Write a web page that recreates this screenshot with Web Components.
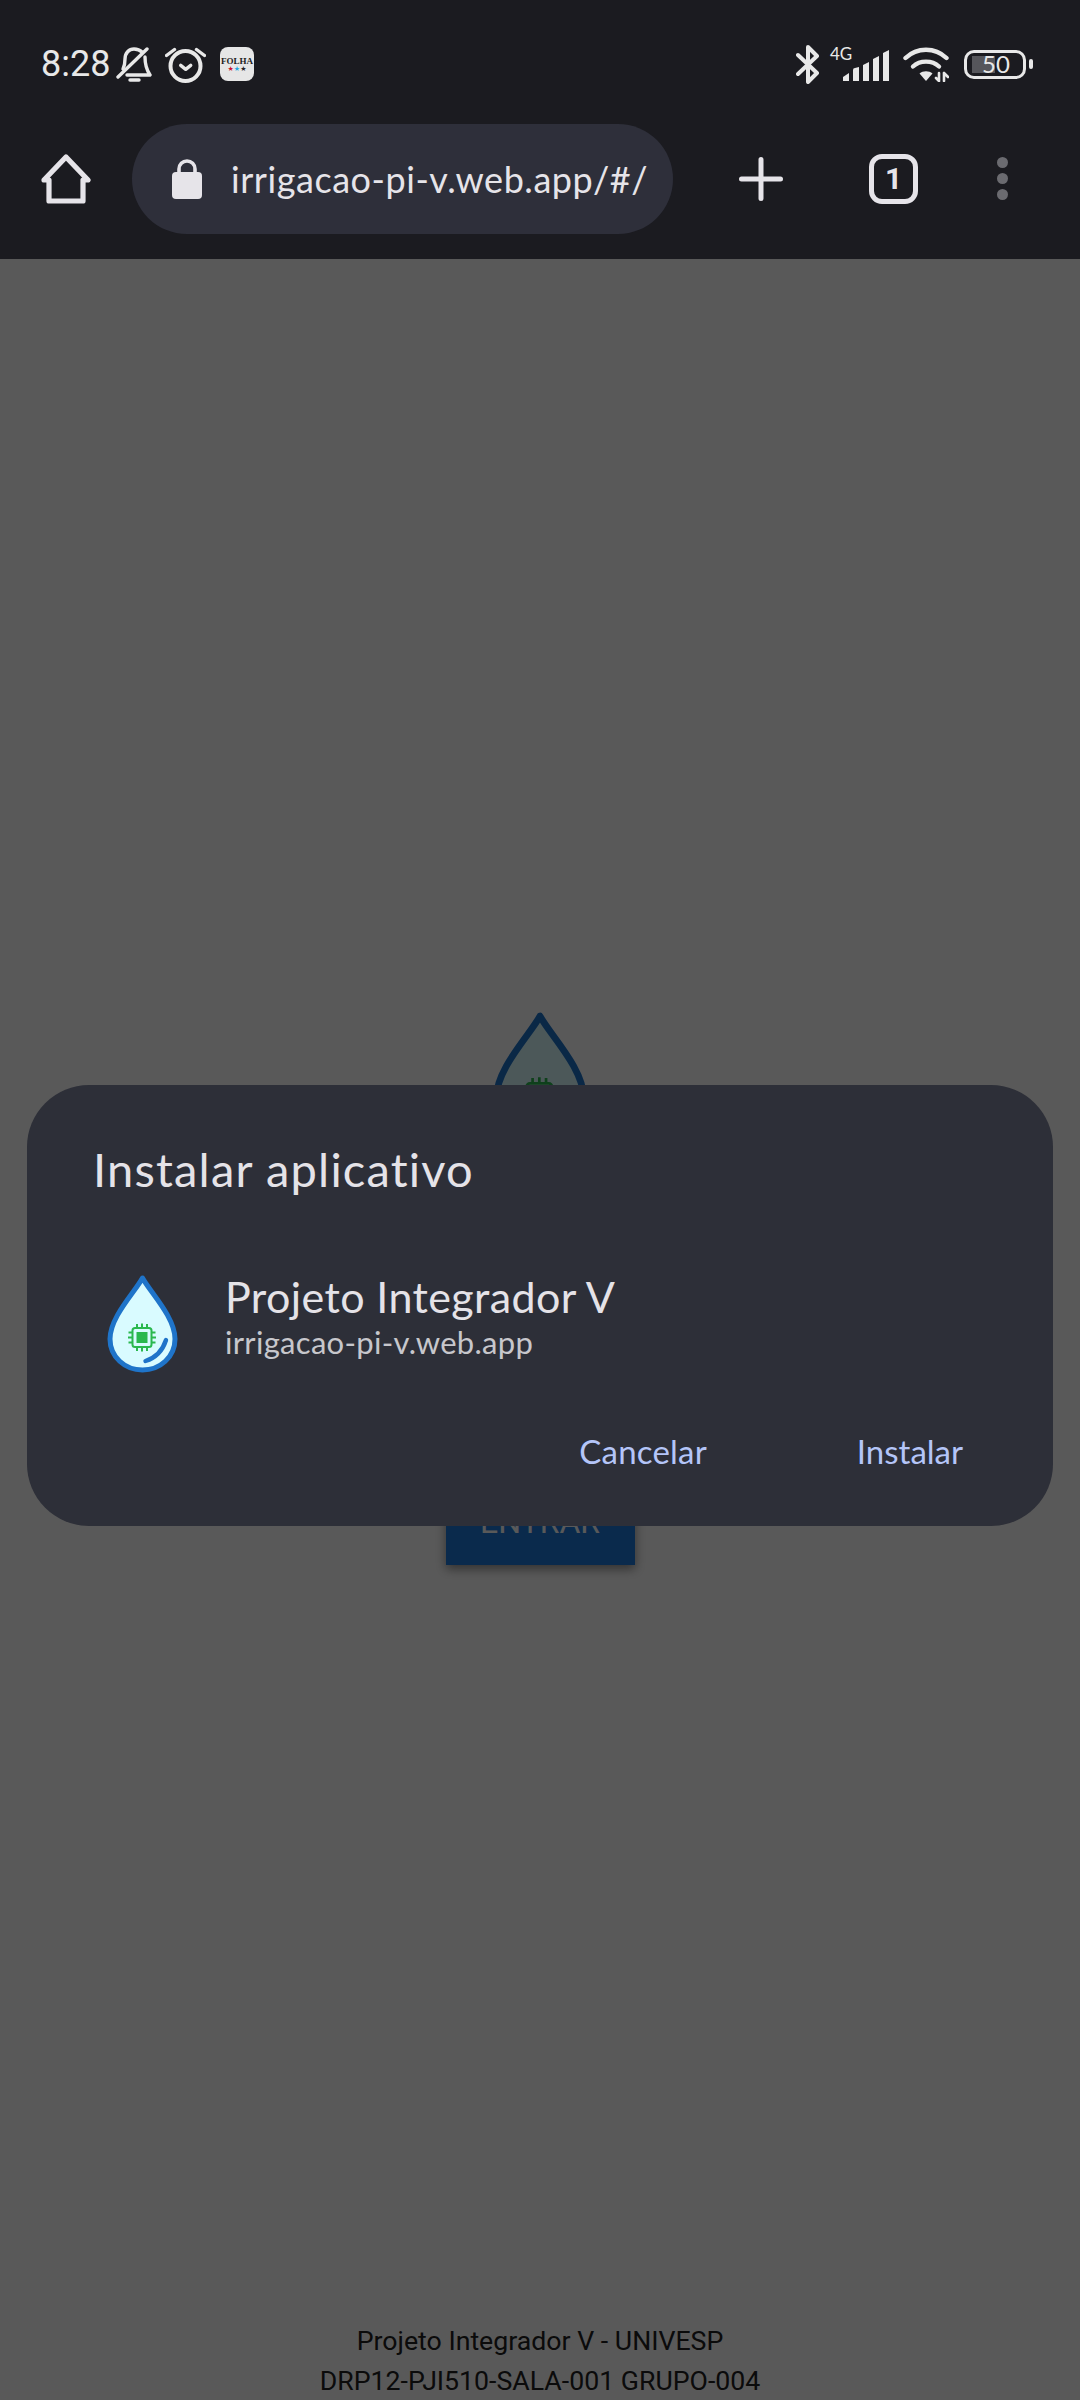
<!DOCTYPE html>
<html lang="pt-BR">
<head>
<meta charset="utf-8">
<title>Projeto Integrador V</title>
<style>
  html, body { margin: 0; padding: 0; background: #1b1b20; }
  body { width: 1080px; height: 2400px; overflow: hidden; }
</style>
</head>
<body>
<app-shell>
  <status-bar></status-bar>
  <browser-toolbar url="irrigacao-pi-v.web.app/#/"></browser-toolbar>
  <login-page>
    <install-dialog name="Projeto Integrador V" host-name="irrigacao-pi-v.web.app"></install-dialog>
  </login-page>
</app-shell>

<script>
class AppShell extends HTMLElement {
  constructor() {
    super();
    const shadow = this.attachShadow({ mode: 'open' });
    shadow.innerHTML = `
      <style>
        :host {
          display: flex;
          flex-direction: column;
          width: 1080px;
          height: 2400px;
          background: #1b1b20;
        }
      </style>
      <slot></slot>
    `;
  }
}

class StatusBar extends HTMLElement {
  constructor() {
    super();
    const shadow = this.attachShadow({ mode: 'open' });
    shadow.innerHTML = `
      <style>
        :host {
          display: flex;
          align-items: center;
          justify-content: space-between;
          box-sizing: border-box;
          height: 98px;
          padding: 30px 47px 0 41px;
          color: #e8e8e8;
          font-family: Roboto, sans-serif;
        }
        .side { display: flex; align-items: center; }
        svg { display: block; flex: none; }
        .line { fill: none; stroke: #e8e8e8; stroke-linecap: round; stroke-linejoin: round; }
        .time { font-size: 36px; line-height: 40px; width: 68px; white-space: nowrap; }
        .bell { margin-left: 7px; }
        .alarm { margin-left: 13px; }
        .folha {
          display: flex;
          flex-direction: column;
          align-items: center;
          justify-content: center;
          width: 34px;
          height: 34px;
          margin-left: 14px;
          border-radius: 8px;
          background: #e6e6e6;
          color: #1c1c1c;
          font: bold 9px/10px "Liberation Serif", serif;
        }
        .stars { display: flex; font: 7px/7px "DejaVu Sans", sans-serif; }
        .signal { position: relative; margin-left: 10px; }
        .four-g {
          position: absolute;
          left: 0;
          top: -2px;
          font: 400 17px/17px Lato, sans-serif;
        }
        .wifi { margin-left: 13px; }
        .battery {
          display: flex;
          align-items: center;
          justify-content: center;
          box-sizing: border-box;
          width: 62px;
          height: 29px;
          margin-left: 15px;
          padding-left: 2px;
          border: 3px solid #e8e8e8;
          border-radius: 10px;
          background: linear-gradient(#56565b, #56565b) no-repeat 5px 3px / 23px 17px;
          font: 400 24px/24px Lato, sans-serif;
        }
        .nub { width: 4px; height: 10px; margin-left: 3px; border-radius: 2px; background: #e8e8e8; }
      </style>
      <div class="side">
        <span class="time">8:28</span>
        <svg class="bell" width="36" height="37" viewBox="0 0 36 37">
          <path class="line" stroke-width="3.4" d="M7 23C9 19 9 16 9 13 9 7 13 3 18 3 21 3 24 4 26 6"/>
          <path class="line" stroke-width="3.4" d="M29 11C29 19 30 23 34 29H11"/>
          <path class="line" stroke-width="3.4" d="M2 31 31 3"/>
          <path class="line" stroke-width="3.4" d="M14 34H23"/>
        </svg>
        <svg class="alarm" width="41" height="37" viewBox="0 0 41 37">
          <circle class="line" stroke-width="4" cx="20.5" cy="20" r="15"/>
          <path class="line" stroke-width="3.4" d="M1.5 9.5 9.5 3.5M31.5 3.5 39.5 9.5"/>
          <path class="line" stroke-width="3.4" d="M15.7 19.3 20.7 23.3 25.7 19.3"/>
        </svg>
        <div class="folha">
          <span>FOLHA</span>
          <span class="stars"><span style="color:#c8102e">★</span><span style="color:#23a6e0">★</span><span style="color:#222">★</span></span>
        </div>
      </div>
      <div class="side">
        <svg width="24" height="39" viewBox="0 0 24 39">
          <path class="line" stroke-width="4" d="M2 10 21 28 12 37V2L21 11 2 29"/>
        </svg>
        <div class="signal">
          <svg width="60" height="34" viewBox="0 0 60 34">
            <g fill="#e8e8e8">
              <path d="M13 30 19 26V34H13Z"/>
              <path d="M23 23Q23 21 25 21L29 20V34H23Z"/>
              <path d="M33 18 39 15V34H33Z"/>
              <path d="M43 12 49 9V34H43Z"/>
              <path d="M53 6 59 3V34H53Z"/>
            </g>
          </svg>
          <span class="four-g">4G</span>
        </div>
        <svg class="wifi" width="46" height="35" viewBox="0 0 46 35">
          <path class="line" stroke-width="4.4" d="M2.5 11C14 0 32 0 43.5 11"/>
          <path class="line" stroke-width="4.4" d="M10 19.5C17 13 29 13 36 19.5"/>
          <path fill="#e8e8e8" d="M16.5 26.5C20 23.5 26 23.5 29.5 26.5L23 34Z"/>
          <path class="line" stroke-width="2.6" d="M36 26V34M33 31 36 34M41 34V26M41 26 45 30"/>
        </svg>
        <span class="battery">50</span>
        <span class="nub"></span>
      </div>
    `;
  }
}

class BrowserToolbar extends HTMLElement {
  static get observedAttributes() {
    return ['url'];
  }

  constructor() {
    super();
    const shadow = this.attachShadow({ mode: 'open' });
    shadow.innerHTML = `
      <style>
        :host {
          display: flex;
          align-items: center;
          box-sizing: border-box;
          height: 161px;
          padding-left: 41px;
          color: #e6e4e9;
        }
        svg { display: block; flex: none; }
        .pill {
          display: flex;
          align-items: center;
          box-sizing: border-box;
          width: 541px;
          height: 110px;
          margin-left: 41px;
          padding-left: 40px;
          border-radius: 55px;
          background: #2e2f3a;
        }
        .url {
          margin-left: 29px;
          font: 400 36px/44px Lato, sans-serif;
          letter-spacing: .55px;
          white-space: nowrap;
        }
        .plus { margin-left: 66px; }
        .tabs {
          display: flex;
          align-items: center;
          justify-content: center;
          box-sizing: border-box;
          width: 49px;
          height: 50px;
          margin-left: 86px;
          border: 5px solid #e6e4e9;
          border-radius: 13px;
          font: 700 30px/30px Roboto, sans-serif;
        }
        .menu {
          display: flex;
          flex-direction: column;
          gap: 5px;
          margin-left: 79px;
        }
        .menu span { width: 11px; height: 11px; border-radius: 50%; background: #6b6b70; }
      </style>
      <svg width="50" height="50" viewBox="0 0 50 50">
        <path fill="none" stroke="#e6e4e9" stroke-width="5.2" stroke-linejoin="round"
              d="M3 26 25 3 47 26H42V47H8V26Z"/>
      </svg>
      <div class="pill">
        <svg width="30" height="40" viewBox="0 0 30 40">
          <path fill="none" stroke="#e6e4e9" stroke-width="3.6" d="M7 17V10A8 8 0 0 1 23 10V17"/>
          <rect x="0" y="13" width="30" height="27" rx="4" fill="#e6e4e9"/>
        </svg>
        <span class="url" id="url"></span>
      </div>
      <svg class="plus" width="44" height="44" viewBox="0 0 44 44">
        <path fill="none" stroke="#e6e4e9" stroke-width="5" stroke-linecap="round" d="M22 2.5V41.5M2.5 22H41.5"/>
      </svg>
      <span class="tabs">1</span>
      <div class="menu"><span></span><span></span><span></span></div>
    `;
    this._urlEl = shadow.getElementById('url');
  }

  connectedCallback() {
    this._render();
  }

  attributeChangedCallback() {
    this._render();
  }

  _render() {
    this._urlEl.textContent = this.getAttribute('url') || '';
  }
}

class AppLogo extends HTMLElement {
  constructor() {
    super();
    const shadow = this.attachShadow({ mode: 'open' });
    shadow.innerHTML = `
      <style>
        :host { display: block; width: 71px; height: 98px; }
        svg { display: block; width: 100%; height: 100%; }
      </style>
      <svg viewBox="0 0 71 98">
        <path fill="#d9fbff" stroke="#1f74c9" stroke-width="5" stroke-linejoin="round"
              d="M35.5 3C28 17 3 42 3 64 3 82 18 95 35.5 95 53 95 68 82 68 64 68 42 43 17 35.5 3Z"/>
        <g fill="none" stroke="#2ab84e" stroke-width="2">
          <rect x="25.5" y="53" width="19" height="19" rx="2.5"/>
          <path d="M30 49V53M35 48.5V53M40 49V53M30 72V76M35 72V76.5M40 72V76M21.5 57.5H25.5M21 62.5H25.5M21.5 67.5H25.5M44.5 57.5H48.5M44.5 62.5H49M44.5 67.5H48.5"/>
        </g>
        <rect x="29.5" y="57" width="11" height="11" fill="#2ab84e"/>
        <path fill="none" stroke="#1f74c9" stroke-width="4.4" stroke-linecap="round" d="M38.5 86Q54 81 59 65"/>
      </svg>
    `;
  }
}

class LoginPage extends HTMLElement {
  constructor() {
    super();
    const shadow = this.attachShadow({ mode: 'open' });
    shadow.innerHTML = `
      <style>
        :host {
          display: flex;
          flex-direction: column;
          flex: 1;
          position: relative;
          background: #fff;
          font-family: Roboto, sans-serif;
        }
        .form {
          display: flex;
          flex-direction: column;
          align-items: center;
          flex: 1;
          padding-top: 753px;
        }
        app-logo { width: 96px; height: 132px; }
        .enter {
          display: flex;
          align-items: center;
          justify-content: center;
          box-sizing: border-box;
          width: 189px;
          height: 86px;
          margin-top: 335px;
          background: #1d78d9;
          color: #fff;
          font: 400 32px/40px Roboto, sans-serif;
          box-shadow: 0 4px 10px rgba(0, 0, 0, .45);
        }
        footer {
          margin-bottom: -1px;
          color: #222;
          font-size: 26.7px;
          line-height: 40px;
          text-align: center;
        }
        .scrim {
          position: absolute;
          inset: 0;
          background: rgba(0, 0, 0, .65);
        }
      </style>
      <div class="form">
        <app-logo></app-logo>
        <div class="enter">ENTRAR</div>
      </div>
      <footer>
        <div>Projeto Integrador V - UNIVESP</div>
        <div>DRP12-PJI510-SALA-001 GRUPO-004</div>
      </footer>
      <div class="scrim"></div>
      <slot></slot>
    `;
  }
}

class InstallDialog extends HTMLElement {
  static get observedAttributes() {
    return ['name', 'host-name'];
  }

  constructor() {
    super();
    const shadow = this.attachShadow({ mode: 'open' });
    shadow.innerHTML = `
      <style>
        :host {
          display: block;
          position: absolute;
          left: 27px;
          top: 826px;
          box-sizing: border-box;
          width: 1026px;
          height: 441px;
          padding: 56px 90px 0 66px;
          border-radius: 62px;
          background: #2d2f38;
          color: #e5e3e8;
          font-family: Lato, sans-serif;
        }
        h2 {
          margin: 0;
          font-size: 47px;
          font-weight: 400;
          line-height: 56px;
          letter-spacing: 1.2px;
        }
        .app {
          display: flex;
          align-items: flex-start;
          margin-top: 78px;
          padding-left: 14px;
        }
        .info { margin-left: 47px; }
        .name { font-size: 43px; line-height: 50px; margin-top: -3px; letter-spacing: .4px; }
        .host { font-size: 31px; line-height: 36px; margin-top: 2px; letter-spacing: .3px; color: #c7c7cc; }
        .actions {
          display: flex;
          justify-content: flex-end;
          gap: 150px;
          margin-top: 58px;
          color: #b4c5f8;
          font-size: 33px;
          line-height: 40px;
        }
        .actions span:first-child { letter-spacing: .2px; }
      </style>
      <h2>Instalar aplicativo</h2>
      <div class="app">
        <app-logo></app-logo>
        <div class="info">
          <div class="name" id="name"></div>
          <div class="host" id="host"></div>
        </div>
      </div>
      <div class="actions">
        <span>Cancelar</span>
        <span>Instalar</span>
      </div>
    `;
    this._nameEl = shadow.getElementById('name');
    this._hostEl = shadow.getElementById('host');
  }

  connectedCallback() {
    this._render();
  }

  attributeChangedCallback() {
    this._render();
  }

  _render() {
    this._nameEl.textContent = this.getAttribute('name') || '';
    this._hostEl.textContent = this.getAttribute('host-name') || '';
  }
}

customElements.define('app-shell', AppShell);
customElements.define('status-bar', StatusBar);
customElements.define('browser-toolbar', BrowserToolbar);
customElements.define('app-logo', AppLogo);
customElements.define('login-page', LoginPage);
customElements.define('install-dialog', InstallDialog);
</script>
</body>
</html>
